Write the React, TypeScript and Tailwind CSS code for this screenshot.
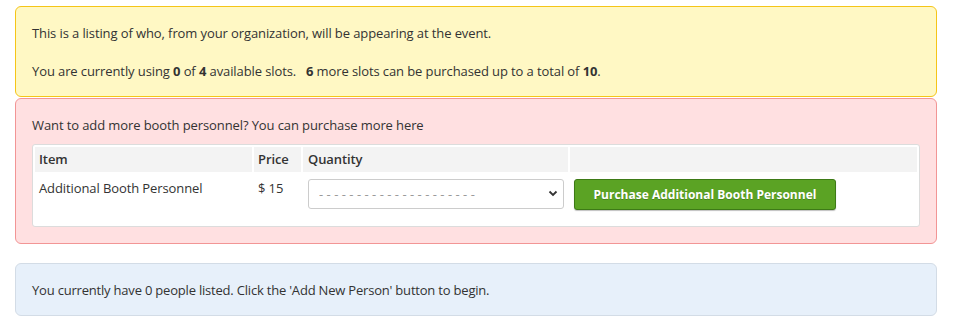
import React, { useState } from 'react';

const App: React.FC = () => {
    const [qty, setQty] = useState('');

    return (
        <div className="w-[962px] h-[331px] bg-white text-[13px] text-[#333] font-['Open_Sans',sans-serif] tracking-[-0.1px]">
            <div className="pt-[6px] pl-[15px] pr-[25px]">
                <div className="bg-[#fff8c4] border border-[#f5c518] rounded-[6px] pt-[16px] pb-[15px] px-[16px] leading-[20px]">
                    <p>This is a listing of who, from your organization, will be appearing at the event.</p>
                    <p className="mt-[18px]">
                        You are currently using <b>0</b> of <b>4</b> available slots. &nbsp; <b>6</b> more slots can be purchased up to a total of <b>10</b>.
                    </p>
                </div>

                <div className="mt-[1px] bg-[#ffe0e1] border border-[#f29595] rounded-[6px] pt-[16px] pb-[16px] px-[16px]">
                    <p className="leading-[20px]">Want to add more booth personnel? You can purchase more here</p>
                    <div className="mt-[9px] bg-white border border-[#dcdcdc] rounded-[3px] p-[2px] grid grid-cols-[217px_47px_265px_1fr] gap-[2px]">
                        <div className="bg-[#f3f3f3] h-[25px] px-[4px] flex items-center font-semibold">Item</div>
                        <div className="bg-[#f3f3f3] h-[25px] px-[4px] flex items-center font-semibold">Price</div>
                        <div className="bg-[#f3f3f3] h-[25px] px-[5px] flex items-center font-semibold">Quantity</div>
                        <div className="bg-[#f3f3f3] h-[25px]"></div>

                        <div className="h-[50px] px-[4px] pt-[4px] leading-[20px]">Additional Booth Personnel</div>
                        <div className="h-[50px] px-[4px] pt-[4px] leading-[20px]">$ 15</div>
                        <div className="h-[50px] pl-[5px] pr-[4px] pt-[5px]">
                            <div className="relative h-[30px]">
                                <select
                                    value={qty}
                                    onChange={(e) => setQty(e.target.value)}
                                    className="appearance-none w-full h-[30px] bg-white border border-[#cccccc] rounded-[3px] pl-[10px] pt-[2px] text-[#9a9a9a] tracking-[3.4px] outline-none"
                                >
                                    <option value="">---------------------</option>
                                    {[1, 2, 3, 4, 5, 6].map(n => (
                                        <option key={n} value={n}>{n}</option>
                                    ))}
                                </select>
                                <svg className="absolute right-[6px] top-[11px] pointer-events-none" width="10" height="7" viewBox="0 0 10 7">
                                    <path d="M1.5 1.5 L5 5 L8.5 1.5" fill="none" stroke="#333" strokeWidth="1.8" />
                                </svg>
                            </div>
                        </div>
                        <div className="h-[50px] pl-[4px] pt-[5px]">
                            <button className="w-[262px] h-[31px] bg-[#5ba324] border border-[#3d7a16] rounded-[3px] text-white font-bold text-[12px] tracking-normal shadow-[0_1px_1px_rgba(0,0,0,0.25)] [text-shadow:0_1px_0_rgba(0,0,0,0.2)]">
                                Purchase Additional Booth Personnel
                            </button>
                        </div>
                    </div>
                </div>

                <div className="mt-[19px] bg-[#e7f0fa] border border-[#d3dce6] rounded-[6px] h-[53px] px-[16px] flex items-center">
                    <p className="leading-[20px] tracking-[-0.2px]">You currently have 0 people listed. Click the 'Add New Person' button to begin.</p>
                </div>
            </div>
        </div>
    );
};

export default App;
